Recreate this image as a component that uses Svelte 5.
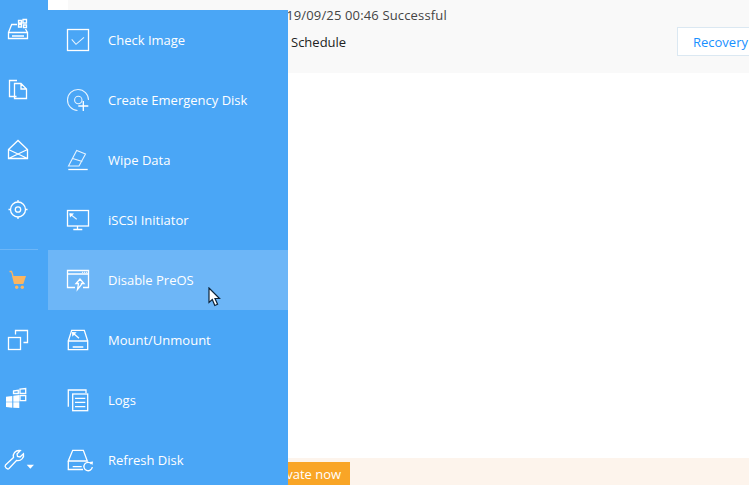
<script>
  const menu = ['Check Image', 'Create Emergency Disk', 'Wipe Data', 'iSCSI Initiator', 'Disable PreOS', 'Mount/Unmount', 'Logs', 'Refresh Disk']
</script>

{#snippet sideIcon(name)}
  <svg class="ic" width="20" height="20" viewBox="0 0 20 20">
    {#if name === 'drive'}
      <path d="M.5 12.5V18.5H19.5V12.5ZM.5 12.5L3.7 4.5H9M19.5 12.5L17.5 9M4 16H16" />
      <path d="M10.5 .5H13.5V3H10.5ZM15 -.5H18.5V3H15ZM10.5 4.5H13.5V7H10.5ZM15.5 5H18.5V7.5H15.5Z" />
    {:else if name === 'docs'}
      <path d="M8.5 16.5H1.5V.5H9M6.5 3.5H13L18.5 9V18.5H6.5ZM13 3.5V9H18.5" />
    {:else if name === 'mail'}
      <path d="M.5 9.5L10 .5L19.5 9.5V18.5H.5ZM.5 9.5L19.5 18.5M19.5 9.5L.5 18.5" />
    {:else if name === 'target'}
      <circle cx="10" cy="9.5" r="7.5" />
      <circle cx="10" cy="9.5" r="2.7" />
      <path d="M10 0V2M10 17V19M.5 9.5H2.5M17.5 9.5H19.5" />
    {:else if name === 'cart'}
      <path class="cart" d="M1.5 1.5H3.5L5 6" />
      <polygon class="cart-fill" points="4,6 18,6 15.3,14 6,14" />
      <circle class="cart-fill" cx="8.7" cy="17.3" r="1.7" />
      <circle class="cart-fill" cx="14.3" cy="17.3" r="1.7" />
    {:else if name === 'copy'}
      <rect x=".5" y="7.5" width="12" height="12" />
      <path d="M7.5 4.5V.5H19.5V12.5H15.5" />
    {:else if name === 'win'}
      <path class="solid" d="M-2 6.8L4.3 6V11.7H-2ZM5.3 5.8L11.3 5V11.7H5.3ZM-2 12.3H4.3V17.7L-2 17ZM5.3 12.3H11.3V18L5.3 17.7Z" />
      <path d="M5.5 1L10.3 .3V3.5H5.5ZM12 -.8L17.7 -1.5V3.5H12ZM12 5.7H17.7V10.7H12Z" />
    {:else if name === 'tool'}
      <path d="M-2.5 15L5.5 7.5C4.5 3.5 7.5 .5 11 .5L12.3 .6L9 4L9.5 6.5L12 7L15.5 3.7C16.5 7.5 13 11.5 8.5 10.5L1 18.5C-.5 20 -4 17 -2.5 15Z" />
      <polygon class="solid" points="18.7,14.7 26,14.7 22.3,18.7" />
    {/if}
  </svg>
{/snippet}

{#snippet menuIcon(i)}
  <svg class="ic" width="22" height="22" viewBox="0 0 22 22">
    {#if i === 0}
      <rect x=".5" y=".5" width="21" height="21" />
      <path class="thin" d="M4.7 10.3L9 15.3L17 8.3" />
    {:else if i === 1}
      <path class="thin" d="M10.5 21.5A10.5 10.5 0 1 1 21.5 11" />
      <circle class="thin" cx="11.3" cy="11" r="3.7" />
      <path d="M16.3 12V22M11.3 17H21.3" />
    {:else if i === 2}
      <path class="thin" d="M1.5 17L9.7 1.5L18.5 5L12 17ZM5.7 9.5L15.3 12.5" />
      <path d="M1.3 20.5H20.7" />
    {:else if i === 3}
      <rect x=".5" y="1.5" width="21" height="15.5" />
      <path d="M10.5 17V20M6.3 20.5H15.3" />
      <path class="thin" d="M3 5L9.7 10.3" />
      <polygon class="solid" points="2.3,4.3 7,4.5 3,8.5" />
    {:else if i === 4}
      <path d="M8 18.5H.5V1.5H21.5V18.5H16M.5 5H21.5" />
      <path class="dots" d="M15 3.3H16.2M17 3.3H18.2M19 3.3H20.2" />
      <path d="M13 10L9 14.5H11.5L10.5 20.5L14.5 15.5V14.5H17Z" />
    {:else if i === 5}
      <path d="M1.3 12V20.7H20.7V12ZM1.3 12L4.7 1.3H17.3L20.7 12M5.7 18H16.3" />
      <path d="M5.7 3.7L12 9.3" />
      <polygon class="solid" points="5,3 9.7,3.3 5.3,7.7" />
    {:else if i === 6}
      <rect x="5.7" y="5" width="15" height="16.7" />
      <path d="M7 1H1.3V17.7M6 1H19V4M8 9.3H18.3M8 13.3H18.3M8 17.7H18.3" />
    {:else if i === 7}
      <path d="M1.3 12V20.5H16M1.3 12L5.7 1.3H16.3L20.3 12ZM5.7 17.7H14.7" />
      <path d="M24.5 15A4.2 4.2 0 1 0 25.3 18" />
      <polygon class="solid" points="22.5,13 26,12.5 25.5,16" />
    {/if}
  </svg>
{/snippet}

<div class="page">
  <aside class="side">
    {#each ['drive', 'docs', 'mail', 'target'] as n}
      <div class="side-item">{@render sideIcon(n)}</div>
    {/each}
    <div class="sep"></div>
    {#each ['cart', 'copy', 'win', 'tool'] as n}
      <div class="side-item">{@render sideIcon(n)}</div>
    {/each}
  </aside>

  <main class="main">
    <header class="head">
      <div class="last">2019/09/25 00:46 Successful</div>
      <div class="row">
        <span class="sched">Schedule</span>
        <button class="recovery">Recovery</button>
      </div>
    </header>
    <div class="body"></div>
    <footer class="foot">
      <span class="activate">Activate now</span>
    </footer>
  </main>

  <nav class="menu">
    {#each menu as label, i}
      <div class="menu-item" class:hover={i === 4}>
        {@render menuIcon(i)}
        <span>{label}</span>
      </div>
    {/each}
  </nav>

  <svg class="cursor" width="14" height="20" viewBox="0 0 14 20">
    <path d="M1 1V15.5L4.3 12.5L6.8 18.5L9.6 17.3L7 11.5H11.5Z" />
  </svg>
</div>

<style>
  :global(body) { margin: 0; background: #fff; }
  .page {
    position: relative;
    display: flex;
    width: 749px;
    height: 485px;
    overflow: hidden;
    font-family: "Open Sans", "Noto Sans", sans-serif;
  }
  .side { width: 48px; flex-shrink: 0; background: #4aa6f6; display: flex; flex-direction: column; }
  .side-item { height: 60px; flex-shrink: 0; padding-left: 8px; display: flex; align-items: center; }
  .sep { height: 1px; width: 38px; margin-top: 9px; background: #6db6f7; flex-shrink: 0; }
  .ic { overflow: visible; flex-shrink: 0; }
  .ic :global(*) { fill: none; stroke: #fff; stroke-width: 1.3; }
  .ic .thin { stroke-width: 1.1; stroke: #e6f3fe; }
  .ic .solid { fill: #fff; stroke: none; }
  .ic .dots { stroke-width: 1; }
  .ic .cart { stroke: #fbb560; }
  .ic .cart-fill { fill: #fbb560; stroke: none; }

  .main { flex: 1; min-width: 0; display: flex; flex-direction: column; padding-left: 20px; }
  .head { height: 73px; flex-shrink: 0; box-sizing: border-box; background: #f9f9f9; padding: 6px 0 0 203px; font-size: 13px; }
  .last { color: #444; line-height: 18px; letter-spacing: .15px; }
  .row { display: flex; justify-content: space-between; margin-top: 3px; margin-left: 20px; align-items: center; }
  .sched { color: #222; }
  .recovery {
    width: 92px;
    height: 29px;
    margin-right: -20px;
    flex-shrink: 0;
    padding: 0 0 0 15px;
    text-align: left;
    background: #fff;
    border: 1px solid #dbe8f2;
    color: #1890ff;
    font: 13px "Open Sans", sans-serif;
  }
  .body { flex: 1; }
  .foot { height: 27px; flex-shrink: 0; background: #fdf4ec; padding: 4px 0 0 187px; box-sizing: border-box; }
  .activate {
    display: block;
    width: 95px;
    height: 23px;
    line-height: 24px;
    background: #f9a526;
    color: #fff;
    font-size: 13px;
    text-align: center;
  }

  .menu { position: absolute; left: 48px; top: 10px; width: 240px; background: #4aa6f6; }
  .menu-item { height: 60px; display: flex; align-items: center; gap: 19px; padding-left: 19px; color: #fff; font-size: 13px; }
  .hover { background: #6db6f7; }
  .cursor { position: absolute; left: 208px; top: 287px; }
  .cursor path { fill: #fff; stroke: #0d2338; stroke-width: 1.2; }
</style>
